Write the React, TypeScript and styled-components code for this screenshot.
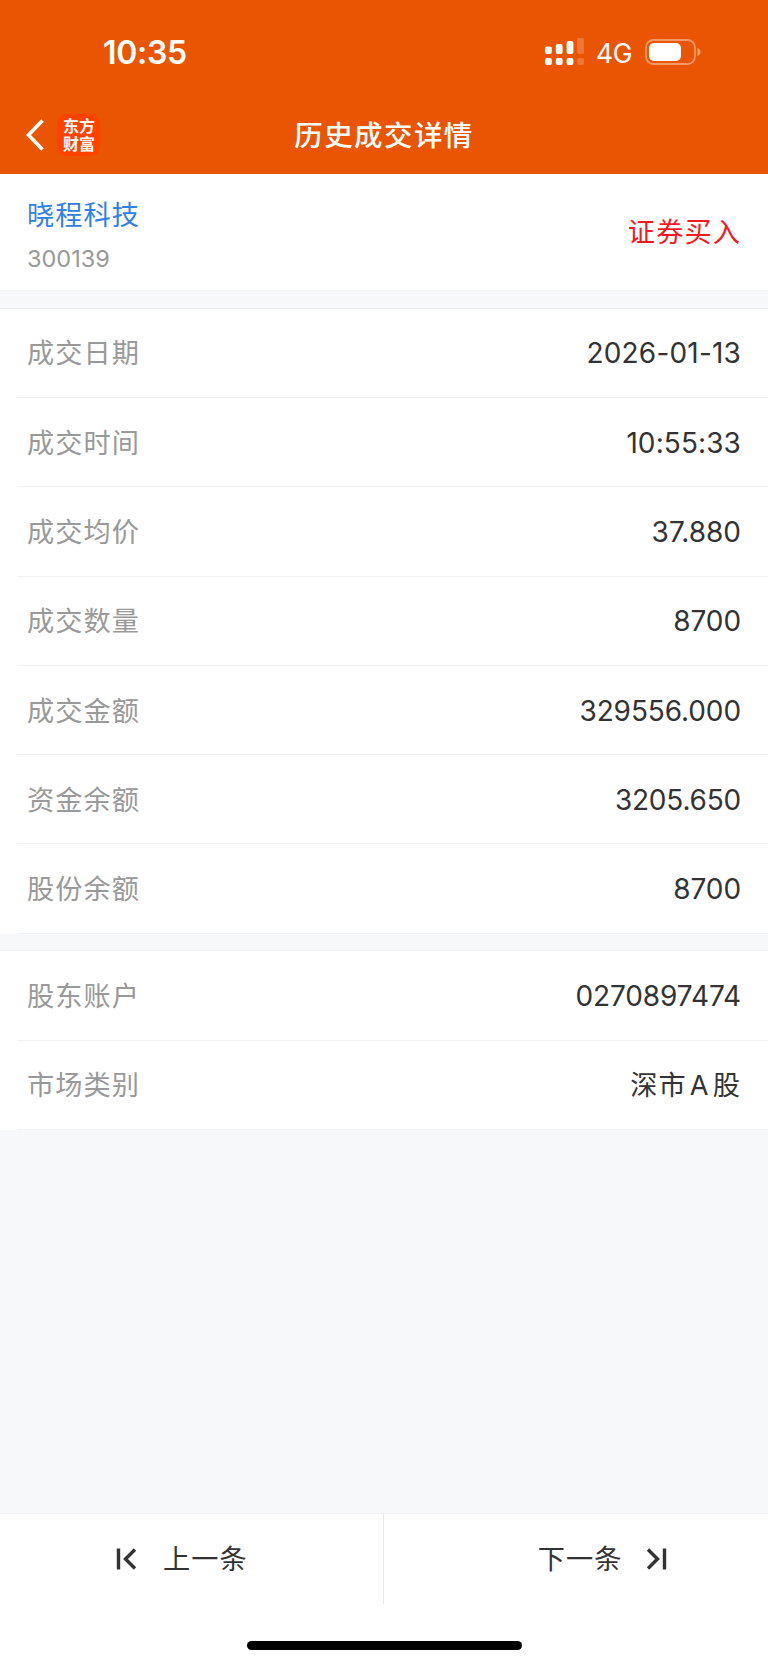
import React from "react";
import styled, { createGlobalStyle } from "styled-components";

const GlobalStyle = createGlobalStyle`
  * { box-sizing: border-box; }
  body {
    margin: 0;
    background: #f6f8fa;
    font-family: Inter, "Noto Sans CJK SC", sans-serif;
    color: #333;
  }
`;

const Screen = styled.div`
  display: flex;
  flex-direction: column;
  width: 768px;
  height: 1665px;
  background: #f6f8fa;
`;

const Header = styled.header`
  height: 174.4px;
  flex: none;
  background: #ea5504;
  color: #fff;
`;

const StatusBar = styled.div`
  display: flex;
  align-items: center;
  justify-content: space-between;
  height: 104px;
  padding: 0 67px 0 103px;
`;

const Clock = styled.span`
  padding-top: 2px;
  font-size: 32px;
  font-weight: 600;
  line-height: 40px;
  letter-spacing: -0.3px;
`;

const StatusIcons = styled.div`
  display: flex;
  align-items: center;
`;

const Network = styled.span`
  width: 36px;
  margin: 2px 13px 0 12px;
  font-size: 26.5px;
  line-height: 32px;
  white-space: nowrap;
  letter-spacing: -0.4px;
`;

const NavBar = styled.div`
  display: grid;
  grid-template-columns: 200px 1fr 200px;
  align-items: center;
  height: 63px;
`;

const NavLeft = styled.div`
  display: flex;
  align-items: center;
  padding: 0 0 1px 26px;
  gap: 13px;
`;

const AppLogo = styled.div`
  width: 43px;
  height: 42px;
  padding: 2px 5px 0 6px;
  border-radius: 9px;
  background: #ff4200;
  font-family: "Noto Sans CJK SC", sans-serif;
  font-size: 16px;
  font-weight: 700;
  line-height: 18px;
  word-break: break-all;
`;

const Title = styled.h1`
  margin: 0;
  padding-top: 1px;
  text-align: center;
  font-size: 28.5px;
  font-weight: 500;
  line-height: 40px;
  letter-spacing: 1.4px;
  white-space: nowrap;
`;

const Summary = styled.section`
  display: flex;
  align-items: center;
  justify-content: space-between;
  flex: none;
  height: 116.6px;
  padding: 3px 27px 0;
  background: #fff;
  border-bottom: 1px solid #f2f3f4;
`;

const StockName = styled.div`
  padding-top: 3px;
  color: #2f80e8;
  font-size: 27.2px;
  line-height: 40px;
  letter-spacing: 1.1px;
`;

const StockCode = styled.div`
  margin-top: 7px;
  color: #999;
  font-size: 23.5px;
  line-height: 32px;
`;

const Side = styled.div`
  margin-top: -1px;
  color: #f6191e;
  font-size: 27.2px;
  line-height: 40px;
  letter-spacing: 1.1px;
`;

const Group = styled.section`
  flex: none;
  margin-top: 16.7px;
  background: #fff;
  border-top: 1px solid #eff0f2;
`;

const Row = styled.div`
  display: flex;
  align-items: center;
  justify-content: space-between;
  height: 89.3px;
  margin-left: 17px;
  padding: 0 27px 0 10px;
  border-bottom: 1px solid #f1f2f3;
`;

const Label = styled.span`
  padding-top: 3px;
  color: #999;
  font-size: 27.2px;
  line-height: 40px;
  letter-spacing: 1.1px;
`;

const Value = styled.span<{ $tracking?: number }>`
  padding-top: 1px;
  font-size: 28px;
  line-height: 40px;
  letter-spacing: ${(p) => p.$tracking ?? -0.1}px;
`;

const MarketValue = styled(Value)`
  padding-top: 3px;
  font-size: 27.2px;
  letter-spacing: 1.1px;
  word-spacing: -5.7px;
`;

const Footer = styled.footer`
  flex: none;
  height: 152.4px;
  margin-top: auto;
  background: #fff;
  border-top: 1px solid #efeff2;
`;

const Pager = styled.nav`
  display: flex;
  height: 90px;
`;

const PagerButton = styled.button<{ $side: "prev" | "next" }>`
  display: flex;
  align-items: center;
  justify-content: ${(p) => (p.$side === "prev" ? "flex-start" : "flex-end")};
  gap: ${(p) => (p.$side === "prev" ? "26px" : "23.5px")};
  width: 384px;
  padding: ${(p) => (p.$side === "prev" ? "0 0 0 116px" : "0 101px 0 0")};
  border: 0;
  border-right: ${(p) => (p.$side === "prev" ? "1px solid #e9e9eb" : "0")};
  background: none;
  color: #333;
  font-family: inherit;
  font-size: 27.2px;
  line-height: 40px;
  letter-spacing: 1.1px;
`;

const PagerText = styled.span`
  padding-top: 2px;
`;

const HomeBar = styled.div`
  width: 275px;
  height: 9px;
  margin: 37px auto 0;
  border-radius: 5px;
  background: #000;
`;

const trade = [
  { label: "成交日期", value: "2026-01-13", tracking: 0.18 },
  { label: "成交时间", value: "10:55:33", tracking: 0.1 },
  { label: "成交均价", value: "37.880", tracking: 0 },
  { label: "成交数量", value: "8700" },
  { label: "成交金额", value: "329556.000" },
  { label: "资金余额", value: "3205.650", tracking: -0.2 },
  { label: "股份余额", value: "8700" },
];

function Signal() {
  const bars = [
    { x: 0, y: 8.5, h: 7.5 },
    { x: 10.8, y: 6, h: 10 },
    { x: 21.6, y: 3, h: 13 },
    { x: 32.2, y: 0, h: 16 },
  ];
  return (
    <svg width="39" height="28" viewBox="0 0 39 28" fill="#fff">
      {bars.map((b, i) => (
        <g key={i} opacity={i === 3 ? 0.2 : 1}>
          <rect x={b.x} y={b.y} width="6.8" height={b.h} rx="2" />
          <rect x={b.x} y="20" width="6.8" height="7" rx="2" />
        </g>
      ))}
    </svg>
  );
}

function Battery() {
  return (
    <svg width="56" height="26" viewBox="0 0 56 26">
      <rect x="1" y="1" width="49" height="24" rx="7.5" fill="none" stroke="#fff" strokeOpacity=".4" strokeWidth="1.8" />
      <rect x="4" y="4" width="32" height="18" rx="5" fill="#fff" />
      <path d="M52.5 9c4 1.4 4 6.600 0 8z" fill="#fff" opacity=".45" />
    </svg>
  );
}

function SkipIcon({ flip }: { flip?: boolean }) {
  return (
    <svg width="21" height="22" viewBox="0 0 21 22" fill="none" stroke="#333" strokeWidth="3.4">
      <g transform={flip ? "translate(21 0) scale(-1 1)" : undefined}>
        <path d="M2.500 .5v21M19 1.500 9.500 11 19 20.500" />
      </g>
    </svg>
  );
}

export default function App() {
  return (
    <>
      <GlobalStyle />
      <Screen>
        <Header>
          <StatusBar>
            <Clock>10:35</Clock>
            <StatusIcons>
              <Signal />
              <Network>4G</Network>
              <Battery />
            </StatusIcons>
          </StatusBar>
          <NavBar>
            <NavLeft>
              <svg width="18" height="32" viewBox="0 0 18 32" fill="none" stroke="#fff" strokeWidth="3.6">
                <path d="M16.500 1.500 2.500 16l14 14.500" />
              </svg>
              <AppLogo>东方财富</AppLogo>
            </NavLeft>
            <Title>历史成交详情</Title>
          </NavBar>
        </Header>

        <Summary>
          <div>
            <StockName>晓程科技</StockName>
            <StockCode>300139</StockCode>
          </div>
          <Side>证券买入</Side>
        </Summary>

        <Group>
          {trade.map(({ label, value, tracking }) => (
            <Row key={label}>
              <Label>{label}</Label>
              <Value $tracking={tracking}>{value}</Value>
            </Row>
          ))}
        </Group>

        <Group>
          <Row>
            <Label>股东账户</Label>
            <Value>0270897474</Value>
          </Row>
          <Row>
            <Label>市场类别</Label>
            <MarketValue>深市 A 股</MarketValue>
          </Row>
        </Group>

        <Footer>
          <Pager>
            <PagerButton $side="prev">
              <SkipIcon />
              <PagerText>上一条</PagerText>
            </PagerButton>
            <PagerButton $side="next">
              <PagerText>下一条</PagerText>
              <SkipIcon flip />
            </PagerButton>
          </Pager>
          <HomeBar />
        </Footer>
      </Screen>
    </>
  );
}
